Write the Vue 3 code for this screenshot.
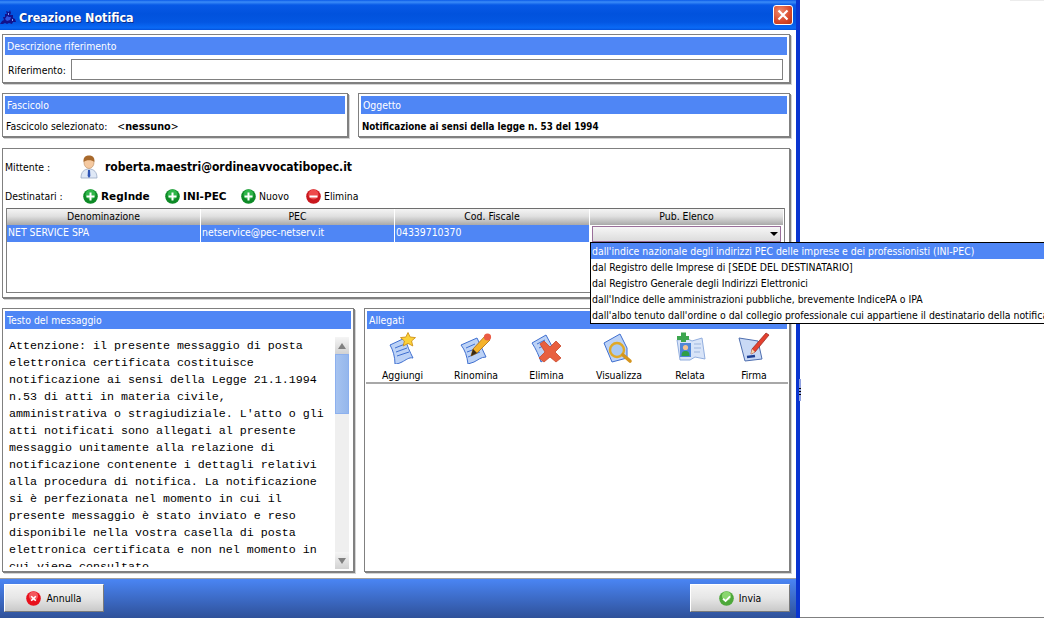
<script setup>
const messageLines = [
  'Attenzione: il presente messaggio di posta',
  'elettronica certificata costituisce',
  'notificazione ai sensi della Legge 21.1.1994',
  'n.53 di atti in materia civile,',
  "amministrativa o stragiudiziale. L'atto o gli",
  'atti notificati sono allegati al presente',
  'messaggio unitamente alla relazione di',
  'notificazione contenente i dettagli relativi',
  'alla procedura di notifica. La notificazione',
  'si è perfezionata nel momento in cui il',
  'presente messaggio è stato inviato e reso',
  'disponibile nella vostra casella di posta',
  'elettronica certificata e non nel momento in',
  'cui viene consultato'
]

const elencoOptions = [
  "dall'indice nazionale degli indirizzi PEC delle imprese e dei professionisti (INI-PEC)",
  'dal Registro delle Imprese di [SEDE DEL DESTINATARIO]',
  'dal Registro Generale degli Indirizzi Elettronici',
  "dall'Indice delle amministrazioni pubbliche, brevemente IndicePA o IPA",
  "dall'albo tenuto dall'ordine o dal collegio professionale cui appartiene il destinatario della notifica"
]
</script>

<template>
  <div class="page">
    <div class="window">
      <header class="titlebar">
        <svg class="app-icon" width="16" height="16" viewBox="0 0 16 16">
          <path d="M0 15 L2 12 L4 11 L3 8 L5 8 L5 5 L7 5 L6 2 L9 3 L10 1 L11 4 L10 6 L13 6 L13 9 L15 10 L16 13 L13 13 L12 15 L9 14 L7 15 L5 14 L3 15 Z" fill="#12128c" />
          <path d="M5 10 L7 7 L9 8 L11 8 L10 11 L7 12 Z" fill="#2f55e0" />
          <path d="M8 4 L9 4 L9 6 L8 6 Z M12 10 L13 10 L13 12 L12 12 Z" fill="#7f9cf0" />
        </svg>
        <span class="title">Creazione Notifica</span>
        <button class="close">
          <svg width="12" height="12" viewBox="0 0 12 12">
            <path d="M1.5 1.5 L10.5 10.5 M10.5 1.5 L1.5 10.5" stroke="#fff" stroke-width="2.2" />
          </svg>
        </button>
      </header>

      <main class="content">
        <section class="panel panel-ref">
          <div class="panel-head">Descrizione riferimento</div>
          <div class="ref-row">
            <label>Riferimento:</label>
            <div class="ref-input"></div>
          </div>
        </section>

        <div class="row-two">
          <section class="panel panel-fascicolo">
            <div class="panel-head">Fascicolo</div>
            <div class="info-row">
              <span>Fascicolo selezionato:</span>
              <span class="nessuno">&lt;<b>nessuno</b>&gt;</span>
            </div>
          </section>
          <section class="panel panel-oggetto">
            <div class="panel-head">Oggetto</div>
            <div class="info-row"><b class="oggetto">Notificazione ai sensi della legge n. 53 del 1994</b></div>
          </section>
        </div>

        <section class="panel panel-dest">
          <div class="sender">
            <span class="sender-label">Mittente :</span>
            <svg class="user-icon" width="18" height="24" viewBox="0 0 18 24">
              <path d="M1 23 C1 17 4 14 9 14 C14 14 17 17 17 23 Z" fill="#dfe8f6" stroke="#9aa9c4" stroke-width=".8" />
              <path d="M8 15 L10 15 L10.4 21 L9 23 L7.6 21 Z" fill="#2f55b5" />
              <ellipse cx="9" cy="7.5" rx="5" ry="6" fill="#f5c9a0" stroke="#b98a5e" stroke-width=".6" />
              <path d="M3.6 7 C3 2 6 .6 9 .6 C12 .6 15 2 14.4 7 C12 4.6 6 4.6 3.6 7 Z" fill="#a8692c" />
            </svg>
            <b class="sender-mail">roberta.maestri@ordineavvocatibopec.it</b>
          </div>
          <div class="recipients">
            <span class="recipients-label">Destinatari :</span>
            <span class="action action-reg">
              <svg class="round" width="15" height="15" viewBox="0 0 15 15"><circle cx="7.5" cy="7.5" r="7.3" fill="#0d8a26" /><circle cx="7.5" cy="5.5" r="5" fill="#2fb64a" /><path d="M3.5 7.5 H11.5 M7.5 3.5 V11.5" stroke="#fff" stroke-width="2" /></svg>
              <b>RegInde</b>
            </span>
            <span class="action action-ini">
              <svg class="round" width="15" height="15" viewBox="0 0 15 15"><circle cx="7.5" cy="7.5" r="7.3" fill="#0d8a26" /><circle cx="7.5" cy="5.5" r="5" fill="#2fb64a" /><path d="M3.5 7.5 H11.5 M7.5 3.5 V11.5" stroke="#fff" stroke-width="2" /></svg>
              <b>INI-PEC</b>
            </span>
            <span class="action action-new">
              <svg class="round" width="15" height="15" viewBox="0 0 15 15"><circle cx="7.5" cy="7.5" r="7.3" fill="#0d8a26" /><circle cx="7.5" cy="5.5" r="5" fill="#2fb64a" /><path d="M3.5 7.5 H11.5 M7.5 3.5 V11.5" stroke="#fff" stroke-width="2" /></svg>
              Nuovo
            </span>
            <span class="action">
              <svg class="round" width="15" height="15" viewBox="0 0 15 15"><circle cx="7.5" cy="7.5" r="7.3" fill="#c9171e" /><circle cx="7.5" cy="5.5" r="5" fill="#ee4a4a" /><path d="M3.5 7.5 H11.5" stroke="#fff" stroke-width="2" /></svg>
              Elimina
            </span>
          </div>
          <div class="table">
            <div class="t-head">
              <div>Denominazione</div>
              <div>PEC</div>
              <div>Cod. Fiscale</div>
              <div>Pub. Elenco</div>
            </div>
            <div class="t-row">
              <div>NET SERVICE SPA</div>
              <div>netservice@pec-netserv.it</div>
              <div>04339710370</div>
              <div class="combo-cell">
                <div class="combo"><i class="combo-arrow"></i></div>
              </div>
            </div>
          </div>
        </section>

        <div class="row-bottom">
          <section class="panel panel-msg">
            <div class="panel-head">Testo del messaggio</div>
            <div class="msg-body">
              <div class="msg-text">
                <div v-for="line in messageLines" :key="line" class="msg-line">{{ line }}</div>
              </div>
              <div class="scrollbar">
                <div class="sb-btn"><i class="sb-up"></i></div>
                <div class="sb-thumb"></div>
                <div class="sb-track"></div>
                <div class="sb-btn"><i class="sb-down"></i></div>
              </div>
            </div>
          </section>

          <section class="panel panel-att">
            <div class="panel-head">Allegati</div>
            <div class="att-tools">
              <div class="tool tool-1">
                <svg width="32" height="32" viewBox="0 0 32 32">
                  <path d="M3 13 L18 6 C20 14 23 20 26 26 C22 25 19 28 15 30 C12 31.5 10 32 8 32 C8 25 6 18 3 13 Z" fill="#bcd2f6" stroke="#3f6fd0" />
                  <path d="M8 16 L18 12 M9 20 L20 16 M10 24 L22 20" stroke="#3f6fd0" />
                  <path d="M21 0.5 L23.2 5 L28.5 5.6 L24.6 9 L25.8 14 L21 11.4 L16.2 14 L17.4 9 L13.5 5.6 L18.8 5 Z" fill="#fbd13a" stroke="#c9890e" stroke-width=".8" />
                </svg>
                <span>Aggiungi</span>
              </div>
              <div class="tool tool-2">
                <svg width="32" height="32" viewBox="0 0 32 32">
                  <path d="M1 13 L17 6 L26 25 C21 25 18 28 14 30 L8 32 C7 24 5 18 1 13 Z" fill="#bcd2f6" stroke="#3f6fd0" />
                  <path d="M6 16 L15 12 M7 20 L15 17 M8 25 L20 20" stroke="#3f6fd0" />
                  <path d="M25 4 L30 8 L17 21 L11 24 L13 17 Z" fill="#f5b32b" stroke="#a86a10" stroke-width=".8" />
                  <circle cx="27.5" cy="5" r="3.6" fill="#ea5b44" />
                  <path d="M13 17 L11 24 L17 21 Z" fill="#3a2a14" />
                </svg>
                <span>Rinomina</span>
              </div>
              <div class="tool tool-3">
                <svg width="32" height="32" viewBox="0 0 32 32">
                  <path d="M1 11 L15 3 L24 20 L10 30 C8 24 5 17 1 11 Z" fill="#bcd2f6" stroke="#3f6fd0" />
                  <path d="M6 12 L14 8 M8 16 L16 12" stroke="#3f6fd0" />
                  <path d="M9 12 L13 9 L19 15 L25 9 L30 14 L24 20 L30 26 L25 30 L19 25 L13 30 L8 26 L14 20 Z" fill="#e8603f" stroke="#c9472a" stroke-width=".8" />
                </svg>
                <span>Elimina</span>
              </div>
              <div class="tool tool-4">
                <svg width="32" height="32" viewBox="0 0 32 32">
                  <path d="M1 11 L17 2 L24 16 L24 26 L9 30 Z" fill="#bcd2f6" stroke="#3f6fd0" />
                  <circle cx="14" cy="18" r="7" fill="#a9c9f2" stroke="#e0a927" stroke-width="2.4" />
                  <path d="M20 23 L27 29" stroke="#d4941e" stroke-width="3.6" stroke-linecap="round" />
                </svg>
                <span>Visualizza</span>
              </div>
              <div class="tool tool-5">
                <svg width="32" height="32" viewBox="0 0 32 32">
                  <path d="M3 8 L14 7 L18 9 L28 6 L31 27 L21 25 L16 28 L6 28 Z" fill="#d8e4f8" stroke="#92aede" />
                  <rect x="6" y="11" width="11" height="14" fill="#4f86d8" />
                  <circle cx="11.5" cy="15.5" r="2.6" fill="#f2c191" />
                  <path d="M7.5 24 C7.5 20 9 19 11.5 19 C14 19 15.5 20 15.5 24 Z" fill="#2f9e46" />
                  <path d="M20 12 H27 M20 16 H27 M20 20 H26" stroke="#9db6de" />
                  <path d="M3 4 H7 V0.5 H12 V4 H15 V8 H12 V10 H7 V8 H3 Z" fill="#3da64f" />
                </svg>
                <span>Relata</span>
              </div>
              <div class="tool tool-6">
                <svg width="32" height="32" viewBox="0 0 32 32">
                  <path d="M1 6 L20 9 L24 27 L7 29 Z" fill="#c9d9f5" stroke="#4f6fb0" />
                  <path d="M9 25 L17 24" stroke="#1d3f94" stroke-width="2.4" />
                  <path d="M28 1 L31 3 L17 20 L13 22 L14 17 Z" fill="#e4402f" stroke="#8f2318" stroke-width=".7" />
                  <path d="M14 17 L13 22 L17 20 Z" fill="#f0d9b0" />
                </svg>
                <span>Firma</span>
              </div>
            </div>
          </section>
        </div>
      </main>

      <footer class="actions">
        <button class="btn">
          <svg width="15" height="15" viewBox="0 0 15 15"><circle cx="7.5" cy="7.5" r="7.3" fill="#e8101c" /><circle cx="7.5" cy="5" r="4.6" fill="#f4585e" /><path d="M5.2 5.2 L9.8 9.8 M9.8 5.2 L5.2 9.8" stroke="#fff" stroke-width="1.6" /></svg>
          Annulla
        </button>
        <button class="btn">
          <svg width="15" height="15" viewBox="0 0 15 15"><circle cx="7.5" cy="7.5" r="7.3" fill="#4da83a" /><circle cx="7.5" cy="5" r="4.6" fill="#8ad66f" /><path d="M4 7.8 L6.6 10 L11 5.4" stroke="#fff" stroke-width="1.8" fill="none" /></svg>
          Invia
        </button>
      </footer>
    </div>

    <ul class="elenco-popup">
      <li v-for="(option, i) in elencoOptions" :key="option" :class="{ selected: i === 0 }">{{ option }}</li>
    </ul>
    <div class="grip"></div>
    <div class="desk-strip"></div>
    <div class="desk-line"></div>
  </div>
</template>

<style scoped>
.page {
  position: relative;
  width: 1044px;
  height: 618px;
  overflow: hidden;
  background: #fff;
  font-family: "DejaVu Sans Condensed", "Liberation Sans", Arial, sans-serif;
  font-size: 10.4px;
  color: #000;
}
.window {
  width: 800px;
  height: 618px;
  box-sizing: border-box;
  border-right: 4px solid #0a35d0;
  display: flex;
  flex-direction: column;
  background: #fff;
}
.titlebar {
  height: 30px;
  flex: none;
  box-sizing: border-box;
  display: flex;
  align-items: center;
  padding: 0 2px 0 0;
  gap: 3px;
  background: linear-gradient(#0a5ae8 0, #3b8cf8 2px, #0759e6 5px, #0152dd 14px, #0356e2 22px, #0a6af6 28px, #0550d8 30px);
}
.app-icon { margin-top: 4px; }
.title {
  flex: 1;
  padding-top: 4px;
  color: #fff;
  font-size: 12.4px;
  font-weight: 700;
  text-shadow: 1px 1px 0 #0a2f8a;
}
.close {
  width: 20px;
  height: 20px;
  margin-right: 1px;
  padding: 0;
  border: 1px solid #fff;
  border-radius: 3px;
  background: radial-gradient(circle at 35% 30%, #ef8a6c, #d8482a 60%, #b83414);
  display: flex;
  align-items: center;
  justify-content: center;
}
.content {
  flex: 1;
  display: flex;
  flex-direction: column;
  padding: 4px 6px 0 2px;
}
.panel {
  box-sizing: border-box;
  border: 1px solid #808080;
  box-shadow: 1px 1px 0 #808080, 2px 2px 0 #d4d4d4;
  padding: 2px;
  background: #fff;
}
.panel-head {
  height: 18px;
  line-height: 19px;
  padding-left: 2px;
  background: #4f86f5;
  color: #fff;
}
.panel-ref { height: 49px; }
.ref-row {
  display: flex;
  align-items: center;
  gap: 4px;
  margin-top: 4px;
  padding-left: 3px;
}
.ref-row label { width: 59px; flex: none; white-space: nowrap; }
.ref-input {
  flex: 1;
  height: 21px;
  box-sizing: border-box;
  margin-right: 4px;
  border: 1px solid #808080;
  background: #fff;
}
.row-two {
  display: flex;
  gap: 10px;
  margin-top: 10px;
}
.panel-fascicolo { width: 346px; height: 44px; }
.panel-oggetto { flex: 1; height: 44px; }
.info-row {
  display: flex;
  align-items: center;
  height: 22px;
  padding-left: 1px;
  margin-top: 1px;
}
.nessuno { margin-left: 10px; }
.nessuno b { font-size: 10.8px; }
.oggetto { font-size: 9.75px; font-weight: 700; }
.panel-dest {
  height: 150px;
  margin-top: 11px;
  padding: 0 3px;
  position: relative;
}
.sender {
  display: flex;
  align-items: center;
  height: 30px;
  margin: 3px 0 0 -1px;
}
.sender-label { width: 75px; }
.sender-mail { margin-left: 7px; font-size: 12px; font-weight: 700; }
.recipients {
  display: flex;
  align-items: center;
  height: 20px;
  margin: 4px 0 0 -1px;
}
.recipients-label { width: 78px; }
.action {
  display: flex;
  align-items: center;
  gap: 3px;
}
.action b { font-family: "DejaVu Sans", sans-serif; font-size: 10.5px; }
.action-reg { width: 82px; }
.action-ini { width: 76px; }
.action-new { width: 65px; }
.table {
  height: 85px;
  margin-top: 2px;
  margin-right: 1px;
  box-sizing: border-box;
  border: 1px solid #808080;
  border-top: 0;
}
.t-head, .t-row {
  display: grid;
  grid-template-columns: 194px 194px 195px 1fr;
}
.t-head {
  height: 17px;
  border-top: 1px solid #6e6e6e;
  box-sizing: border-box;
  background: linear-gradient(#f4f4f4, #e0e0e0 45%, #a9a9a9);
}
.t-head > div {
  text-align: center;
  line-height: 15px;
  border-right: 1px solid #fff;
}
.t-row { height: 17px; }
.t-row > div {
  background: #4f86f5;
  color: #fff;
  line-height: 15px;
  padding-left: 1px;
  border-right: 1px solid #fff;
  white-space: nowrap;
}
.t-row > .combo-cell {
  background: #fff;
  padding: 0 3px 0 2px;
  border: 0;
}
.combo {
  position: relative;
  height: 14px;
  margin-top: 1px;
  border: 1px solid #9a6f9a;
  background: linear-gradient(#f6f6f6, #dcdcdc);
}
.combo-arrow {
  position: absolute;
  right: 2px;
  top: 5px;
  border-left: 4px solid transparent;
  border-right: 4px solid transparent;
  border-top: 4px solid #000;
}
.row-bottom {
  display: flex;
  gap: 10px;
  margin-top: 10px;
}
.panel-msg { width: 352px; height: 264px; }
.panel-att { flex: 1; height: 264px; padding: 2px; }
.msg-body {
  display: flex;
  height: 240px;
  overflow: hidden;
}
.msg-text {
  flex: 1;
  padding: 9px 0 0 4px;
  height: 229px;
  overflow: hidden;
  font-family: "Liberation Mono", "Courier New", monospace;
  font-size: 11.67px;
  line-height: 17px;
  white-space: pre;
}
.scrollbar {
  width: 14px;
  margin-top: 8px;
  margin-right: 2px;
  height: 232px;
  display: flex;
  flex-direction: column;
  background: #efefef;
}
.sb-btn {
  height: 17px;
  flex: none;
  display: flex;
  align-items: center;
  justify-content: center;
  background: linear-gradient(#f5f5f5, #d2d2d2);
}
.sb-up {
  border-left: 4px solid transparent;
  border-right: 4px solid transparent;
  border-bottom: 6px solid #808080;
}
.sb-down {
  border-left: 4px solid transparent;
  border-right: 4px solid transparent;
  border-top: 6px solid #808080;
}
.sb-thumb {
  height: 60px;
  flex: none;
  box-sizing: border-box;
  border: 1px solid #8cb0ee;
  background: linear-gradient(90deg, #a6c3f0, #95b7ec);
}
.sb-track { flex: 1; }
.att-tools {
  display: flex;
  height: 50px;
  padding-top: 3px;
  margin: 0 -1px;
  border-bottom: 2px solid #a8a8a8;
}
.tool {
  display: flex;
  flex-direction: column;
  align-items: center;
}
.tool span { margin-top: 5px; line-height: 13px; }
.tool-1 { width: 73px; }
.tool-2 { width: 74px; }
.tool-3 { width: 67px; }
.tool-4 { width: 78px; }
.tool-5 { width: 64px; }
.tool-6 { width: 64px; }
.actions {
  height: 40px;
  flex: none;
  box-sizing: border-box;
  border-top: 1px solid #a0a0a0;
  background: linear-gradient(#4a85f4, #2f5199);
  display: flex;
  justify-content: space-between;
  padding: 5px 6px 0 4px;
}
.btn {
  width: 100px;
  height: 28px;
  box-sizing: border-box;
  padding: 0;
  display: flex;
  align-items: center;
  justify-content: center;
  gap: 5px;
  border: 0;
  border-top: 1px solid #fff;
  border-left: 1px solid #fff;
  border-right: 1px solid #7a7a7a;
  border-bottom: 1px solid #7a7a7a;
  background: linear-gradient(#f4f4f4, #e6e6e6 50%, #c9c9c9);
  font-family: inherit;
  font-size: 10.4px;
  color: #000;
}
.elenco-popup {
  position: absolute;
  left: 590px;
  top: 242px;
  width: 480px;
  margin: 0;
  padding: 0;
  list-style: none;
  box-sizing: border-box;
  border: 1px solid #000;
  background: #fff;
}
.elenco-popup li {
  height: 16px;
  line-height: 17px;
  padding-left: 1px;
  white-space: nowrap;
}
.elenco-popup li.selected {
  background: #4f86f5;
  color: #fff;
}
.grip {
  position: absolute;
  left: 799px;
  top: 379px;
  width: 2px;
  height: 22px;
  background: linear-gradient(#8fa0e0 0, #8fa0e0 9px, #000 9px, #000 10px, #8fa0e0 10px, #8fa0e0 12px, #000 12px, #000 13px, #8fa0e0 13px, #8fa0e0 15px, #000 15px, #000 16px, #8fa0e0 16px);
}
.desk-strip {
  position: absolute;
  left: 1010px;
  right: 0;
  top: 0;
  height: 1px;
  background: #ececec;
}
.desk-line {
  position: absolute;
  left: 800px;
  right: 0;
  bottom: 0;
  height: 1px;
  background: #808080;
}
</style>
